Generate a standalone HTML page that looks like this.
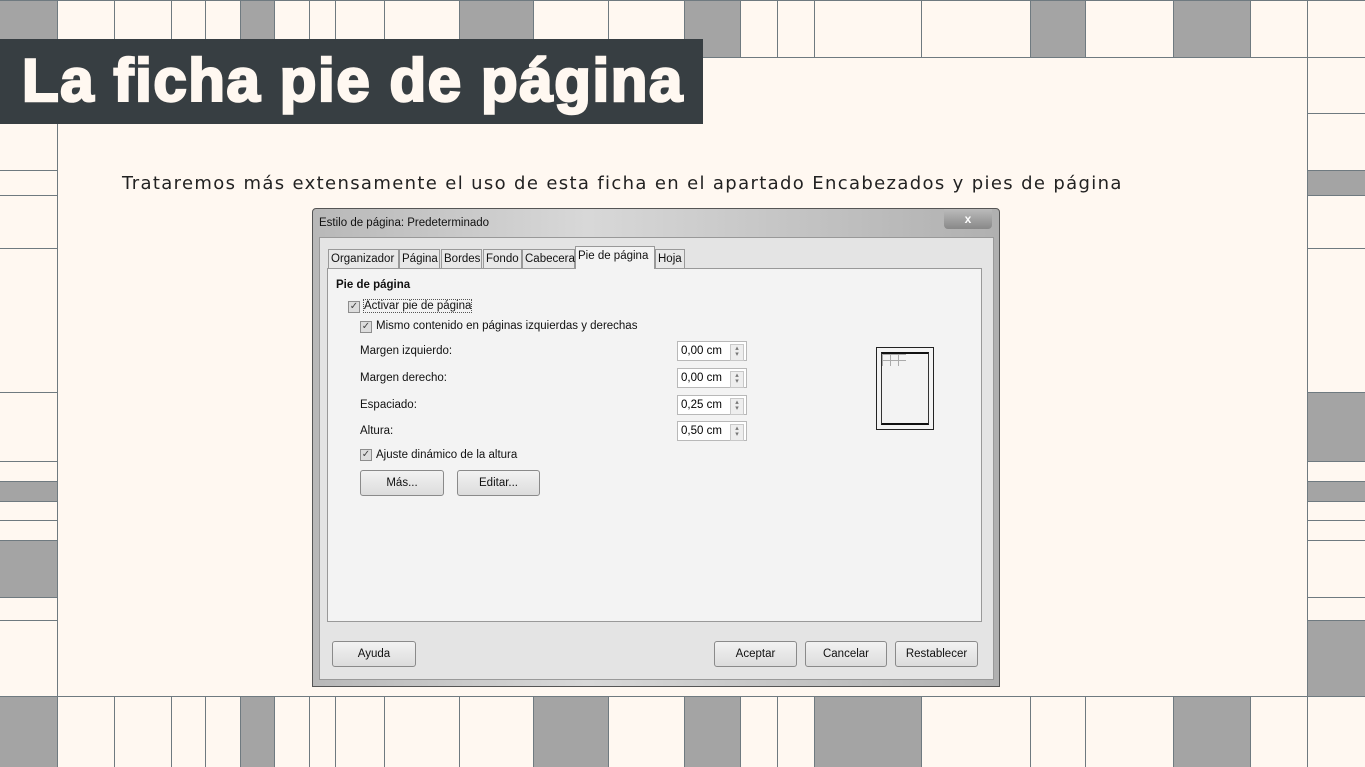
<!DOCTYPE html>
<html><head><meta charset="utf-8"><style>
*{margin:0;padding:0;box-sizing:border-box}
body{width:1365px;height:767px;background:#fff8f1;position:relative;overflow:hidden;font-family:"Liberation Sans",sans-serif}
.a{position:absolute}
.g{position:absolute;background:#a4a4a4}
.vl{position:absolute;width:1px;background:#6f7a80}
.hl{position:absolute;height:1px;background:#6f7a80}
.d{font-family:"Liberation Sans",sans-serif;font-size:11.5px;color:#111;position:absolute;white-space:nowrap}
.btn{position:absolute;height:26px;border:1px solid #8a8a8a;border-radius:3px;background:linear-gradient(#f2f2f2,#dcdcdc);font-family:"Liberation Sans",sans-serif;font-size:11.5px;text-align:center;line-height:24px;color:#111}
.sp{position:absolute;width:70px;height:20px;border:1px solid #b8b8b8;background:#fff;font-family:"Liberation Sans",sans-serif;font-size:11.5px;line-height:18px;padding-left:3px}
.sp:after{content:"▴\A▾";white-space:pre;font-size:7px;line-height:6px;text-align:center;color:#777;padding-top:1px;position:absolute;right:2px;top:2px;width:12px;height:14px;border:1px solid #c8c8c8;background:#eee}
.cb{position:absolute;width:12px;height:12px;border:1px solid #8d8d8d;background:#ddd;font-size:10px;line-height:10px;text-align:center;color:#444}
.tab{position:absolute;top:249px;height:19px;border:1px solid #999;border-bottom:none;background:#e8e8e8;font-family:"Liberation Sans",sans-serif;font-size:11.5px;line-height:18px;padding:0 2px;color:#111;white-space:nowrap}
</style></head><body>
<div class="g" style="left:0;top:0;width:57px;height:39px"></div>
<div class="g" style="left:240px;top:0;width:34px;height:57px"></div>
<div class="g" style="left:459px;top:0;width:74px;height:57px"></div>
<div class="g" style="left:684px;top:0;width:56px;height:57px"></div>
<div class="g" style="left:1030px;top:0;width:55px;height:57px"></div>
<div class="g" style="left:1173px;top:0;width:77px;height:57px"></div>
<div class="g" style="left:0;top:696px;width:57px;height:71px"></div>
<div class="g" style="left:240px;top:696px;width:34px;height:71px"></div>
<div class="g" style="left:533px;top:696px;width:75px;height:71px"></div>
<div class="g" style="left:684px;top:696px;width:56px;height:71px"></div>
<div class="g" style="left:814px;top:696px;width:107px;height:71px"></div>
<div class="g" style="left:1173px;top:696px;width:77px;height:71px"></div>
<div class="g" style="left:0;top:481px;width:57px;height:20px"></div>
<div class="g" style="left:0;top:540px;width:57px;height:57px"></div>
<div class="g" style="left:1307px;top:170px;width:58px;height:25px"></div>
<div class="g" style="left:1307px;top:392px;width:58px;height:69px"></div>
<div class="g" style="left:1307px;top:481px;width:58px;height:20px"></div>
<div class="g" style="left:1307px;top:620px;width:58px;height:76px"></div>
<div class="vl" style="left:57px;top:0;height:767px"></div>
<div class="vl" style="left:1307px;top:0;height:767px"></div>
<div class="hl" style="left:0;top:57px;width:1365px"></div>
<div class="hl" style="left:0;top:696px;width:1365px"></div>
<div class="hl" style="left:0;top:0;width:1365px"></div>
<div class="vl" style="left:114px;top:0;height:57px"></div><div class="vl" style="left:171px;top:0;height:57px"></div><div class="vl" style="left:205px;top:0;height:57px"></div><div class="vl" style="left:240px;top:0;height:57px"></div><div class="vl" style="left:274px;top:0;height:57px"></div><div class="vl" style="left:309px;top:0;height:57px"></div><div class="vl" style="left:335px;top:0;height:57px"></div><div class="vl" style="left:384px;top:0;height:57px"></div><div class="vl" style="left:459px;top:0;height:57px"></div><div class="vl" style="left:533px;top:0;height:57px"></div><div class="vl" style="left:608px;top:0;height:57px"></div><div class="vl" style="left:684px;top:0;height:57px"></div><div class="vl" style="left:740px;top:0;height:57px"></div><div class="vl" style="left:777px;top:0;height:57px"></div><div class="vl" style="left:814px;top:0;height:57px"></div><div class="vl" style="left:921px;top:0;height:57px"></div><div class="vl" style="left:1030px;top:0;height:57px"></div><div class="vl" style="left:1085px;top:0;height:57px"></div><div class="vl" style="left:1173px;top:0;height:57px"></div><div class="vl" style="left:1250px;top:0;height:57px"></div>
<div class="vl" style="left:114px;top:696px;height:71px"></div><div class="vl" style="left:171px;top:696px;height:71px"></div><div class="vl" style="left:205px;top:696px;height:71px"></div><div class="vl" style="left:240px;top:696px;height:71px"></div><div class="vl" style="left:274px;top:696px;height:71px"></div><div class="vl" style="left:309px;top:696px;height:71px"></div><div class="vl" style="left:335px;top:696px;height:71px"></div><div class="vl" style="left:384px;top:696px;height:71px"></div><div class="vl" style="left:459px;top:696px;height:71px"></div><div class="vl" style="left:533px;top:696px;height:71px"></div><div class="vl" style="left:608px;top:696px;height:71px"></div><div class="vl" style="left:684px;top:696px;height:71px"></div><div class="vl" style="left:740px;top:696px;height:71px"></div><div class="vl" style="left:777px;top:696px;height:71px"></div><div class="vl" style="left:814px;top:696px;height:71px"></div><div class="vl" style="left:921px;top:696px;height:71px"></div><div class="vl" style="left:1030px;top:696px;height:71px"></div><div class="vl" style="left:1085px;top:696px;height:71px"></div><div class="vl" style="left:1173px;top:696px;height:71px"></div><div class="vl" style="left:1250px;top:696px;height:71px"></div>
<div class="hl" style="left:0;top:170px;width:57px"></div><div class="hl" style="left:0;top:195px;width:57px"></div><div class="hl" style="left:0;top:248px;width:57px"></div><div class="hl" style="left:0;top:392px;width:57px"></div><div class="hl" style="left:0;top:461px;width:57px"></div><div class="hl" style="left:0;top:481px;width:57px"></div><div class="hl" style="left:0;top:501px;width:57px"></div><div class="hl" style="left:0;top:520px;width:57px"></div><div class="hl" style="left:0;top:540px;width:57px"></div><div class="hl" style="left:0;top:597px;width:57px"></div><div class="hl" style="left:0;top:620px;width:57px"></div>
<div class="hl" style="left:1307px;top:113px;width:58px"></div><div class="hl" style="left:1307px;top:170px;width:58px"></div><div class="hl" style="left:1307px;top:195px;width:58px"></div><div class="hl" style="left:1307px;top:248px;width:58px"></div><div class="hl" style="left:1307px;top:392px;width:58px"></div><div class="hl" style="left:1307px;top:461px;width:58px"></div><div class="hl" style="left:1307px;top:481px;width:58px"></div><div class="hl" style="left:1307px;top:501px;width:58px"></div><div class="hl" style="left:1307px;top:520px;width:58px"></div><div class="hl" style="left:1307px;top:540px;width:58px"></div><div class="hl" style="left:1307px;top:597px;width:58px"></div><div class="hl" style="left:1307px;top:620px;width:58px"></div>
<div class="a" style="left:0;top:39px;width:703px;height:85px;background:#373e42"></div>
<div class="a" style="left:22px;top:42px;font-size:60px;font-weight:bold;color:#fff8f1;letter-spacing:1.6px;line-height:78px;-webkit-text-stroke:2.5px #fff8f1;white-space:nowrap">La ficha pie de página</div>
<div class="a" style="left:122px;top:173px;color:#222;white-space:nowrap;font-family:'DejaVu Sans','Liberation Sans',sans-serif;font-size:18px;letter-spacing:1.35px">Trataremos más extensamente el uso de esta ficha en el apartado Encabezados y pies de página</div>
<div class="a" style="left:312px;top:208px;width:688px;height:479px;background:linear-gradient(90deg,#b8b8b8,#d8d8d8 40%,#b0b0b0);border:1px solid #555;border-radius:4px 4px 0 0"></div>
<div class="a" style="left:944px;top:209px;width:48px;height:20px;background:linear-gradient(#bbb,#888);border-radius:0 0 4px 4px;color:#fff;text-align:center;font-size:12px;line-height:20px;font-weight:bold">x</div>
<div class="d" style="left:319px;top:217px">Estilo de página: Predeterminado</div>
<div class="a" style="left:319px;top:237px;width:675px;height:443px;background:#e4e4e4;border:1px solid #999"></div>
<div class="tab" style="left:328px;width:71px">Organizador</div>
<div class="tab" style="left:399px;width:41px">Página</div>
<div class="tab" style="left:441px;width:41px">Bordes</div>
<div class="tab" style="left:483px;width:39px">Fondo</div>
<div class="tab" style="left:522px;width:53px">Cabecera</div>
<div class="tab" style="left:575px;top:246px;height:23px;width:80px;background:#f3f3f3;z-index:2">Pie de página</div>
<div class="tab" style="left:655px;width:30px">Hoja</div>
<div class="a" style="left:327px;top:268px;width:655px;height:354px;background:#f3f3f3;border:1px solid #999"></div>
<div class="d" style="left:336px;top:279px;font-weight:bold">Pie de página</div>
<div class="cb" style="left:348px;top:301px">✓</div>
<div class="d" style="left:364px;top:300px;outline:1px dotted #555">Activar pie de página</div>
<div class="cb" style="left:360px;top:321px">✓</div>
<div class="d" style="left:376px;top:320px">Mismo contenido en páginas izquierdas y derechas</div>
<div class="d" style="left:360px;top:345px">Margen izquierdo:</div>
<div class="d" style="left:360px;top:372px">Margen derecho:</div>
<div class="d" style="left:360px;top:399px">Espaciado:</div>
<div class="d" style="left:360px;top:425px">Altura:</div>
<div class="sp" style="left:677px;top:341px">0,00 cm</div>
<div class="sp" style="left:677px;top:368px">0,00 cm</div>
<div class="sp" style="left:677px;top:395px">0,25 cm</div>
<div class="sp" style="left:677px;top:421px">0,50 cm</div>
<div class="cb" style="left:360px;top:449px">✓</div>
<div class="d" style="left:376px;top:449px">Ajuste dinámico de la altura</div>
<div class="btn" style="left:360px;top:470px;width:84px">Más...</div>
<div class="btn" style="left:457px;top:470px;width:83px">Editar...</div>
<div class="a" style="left:876px;top:347px;width:58px;height:83px;border:1px solid #222;background:#f3f3f3"></div>
<div class="a" style="left:881px;top:352px;width:48px;height:73px;border:1px solid #333;border-top:2px solid #111;border-bottom:2px solid #111"></div>
<div class="a" style="left:882px;top:354px;width:24px;height:12px;background:repeating-linear-gradient(90deg,#aaa 0 1px,transparent 1px 8px),repeating-linear-gradient(#aaa 0 1px,transparent 1px 6px)"></div>
<div class="btn" style="left:332px;top:641px;width:84px">Ayuda</div>
<div class="btn" style="left:714px;top:641px;width:83px">Aceptar</div>
<div class="btn" style="left:805px;top:641px;width:82px">Cancelar</div>
<div class="btn" style="left:895px;top:641px;width:83px">Restablecer</div>
</body></html>
